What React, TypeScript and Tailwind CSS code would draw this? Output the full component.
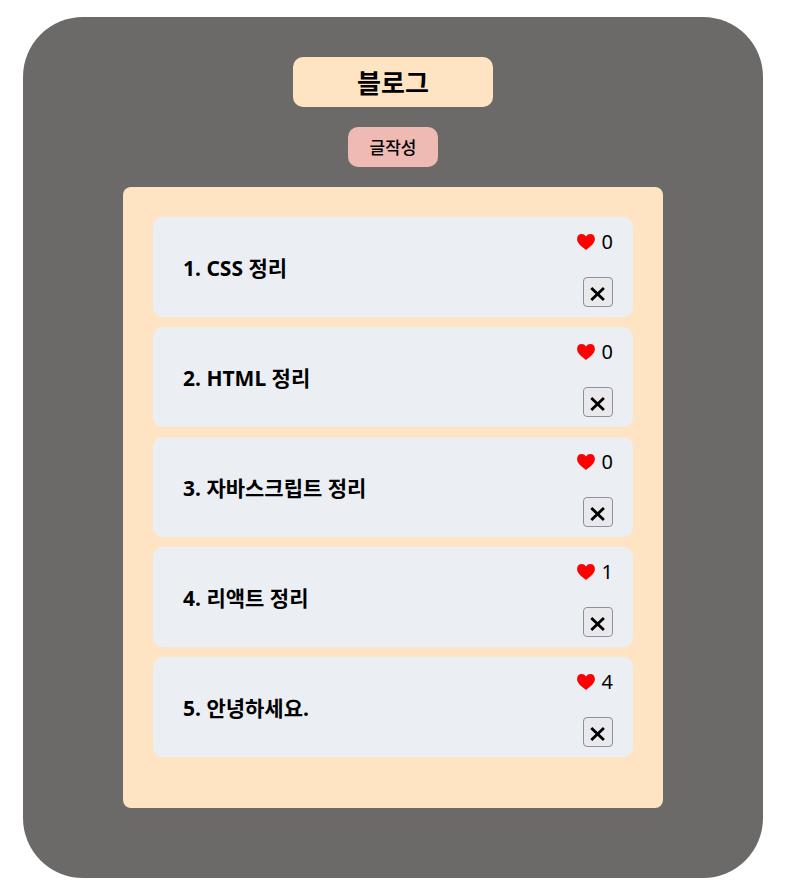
import { useState } from 'react';

type Post = { id: number; title: string; likes: number };

const initialPosts: Post[] = [
  { id: 1, title: 'CSS 정리', likes: 0 },
  { id: 2, title: 'HTML 정리', likes: 0 },
  { id: 3, title: '자바스크립트 정리', likes: 0 },
  { id: 4, title: '리액트 정리', likes: 1 },
  { id: 5, title: '안녕하세요.', likes: 4 },
];

function HeartIcon() {
  return (
    <svg viewBox="0 0 18 16" className="h-4 w-[18px]" fill="#ff0000" aria-hidden="true">
      <path d="M9 2.600C7.900 0.900 6.400 0.100 4.600 0.100C2 0.100 0.100 2.100 0.100 5C0.100 9.200 4.200 12.200 9 16C13.800 12.200 17.900 9.200 17.900 5C17.900 2.100 16 0.100 13.400 0.100C11.600 0.100 10.100 0.900 9 2.600Z" />
    </svg>
  );
}

function CloseIcon() {
  return (
    <svg viewBox="0 0 16 16" className="h-4 w-4" fill="none" stroke="#000" strokeWidth="2.8" aria-hidden="true">
      <path d="M1.300 1.900L13.900 14.100M13.900 1.900L1.300 14.100" />
    </svg>
  );
}

type CardProps = { post: Post; index: number; onLike: () => void; onRemove: () => void };

function PostCard({ post, index, onLike, onRemove }: CardProps) {
  return (
    <li className="flex h-[100px] items-stretch justify-between rounded-[10px] bg-[#ebeff4] pr-5 pl-[30px]">
      <h2 className="self-center pt-0.5 text-[21px] leading-7 font-bold">
        {index + 1}. {post.title}
      </h2>
      <div className="flex flex-col items-end justify-between py-[10px]">
        <button type="button" onClick={onLike} aria-label={`좋아요 ${post.likes}`} className="flex h-[30px] items-center gap-[7px] text-[20px] leading-[30px]">
          <HeartIcon />
          <span>{post.likes}</span>
        </button>
        <button
          type="button"
          onClick={onRemove}
          aria-label="삭제"
          className="flex h-[30px] w-[30px] items-end justify-center rounded-[4px] border border-[#8f8f9d] bg-[#e9e9ed] pb-1"
        >
          <CloseIcon />
        </button>
      </div>
    </li>
  );
}

export default function App() {
  const [posts, setPosts] = useState(initialPosts);

  const like = (id: number) =>
    setPosts((list) => list.map((p) => (p.id === id ? { ...p, likes: p.likes + 1 } : p)));
  const remove = (id: number) => setPosts((list) => list.filter((p) => p.id !== id));

  return (
    <div className="bg-white pt-[17px] pr-6 pb-[17px] pl-[23px] font-['Noto_Sans','Noto_Sans_CJK_KR',sans-serif] text-black">
      <main className="flex flex-col items-center gap-5 rounded-[60px] bg-[#6b6a68] px-[100px] pt-10 pb-[70px]">
        <h1 className="flex h-[50px] w-[200px] items-center justify-center rounded-[10px] bg-[#ffe4c4] pt-0.5 text-[26px] leading-8 font-bold">
          블로그
        </h1>
        <button type="button" className="h-10 w-[90px] rounded-[10px] bg-[#f0bab4] pt-0.5 text-[17px] leading-6 font-medium">
          글작성
        </button>
        <ul className="flex w-full flex-col gap-[10px] rounded-[8px] bg-[#ffe4c4] px-[30px] pt-[30px] pb-[51px]">
          {posts.map((post, i) => (
            <PostCard key={post.id} post={post} index={i} onLike={() => like(post.id)} onRemove={() => remove(post.id)} />
          ))}
        </ul>
      </main>
    </div>
  );
}
